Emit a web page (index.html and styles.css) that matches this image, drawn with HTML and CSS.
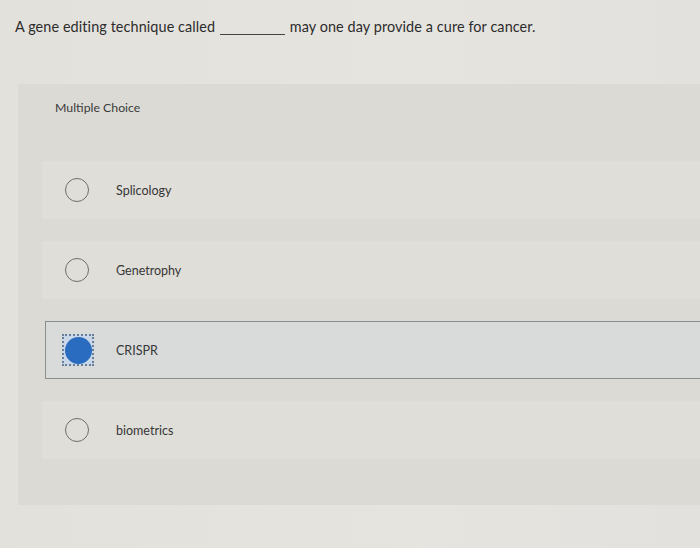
FILE: index.html
```html
<!DOCTYPE html>
<html>
<head>
<meta charset="utf-8">
<link rel="stylesheet" href="styles.css">
</head>
<body>
<div class="page">
  <p class="question">A gene editing technique called <span class="blank"></span> may one day provide a cure for cancer.</p>
  <div class="panel">
    <div class="kind">Multiple Choice</div>
    <div class="options">
      <div class="option"><span class="radio"></span><span class="label">Splicology</span></div>
      <div class="option"><span class="radio"></span><span class="label">Genetrophy</span></div>
      <div class="option selected"><span class="focus"><span class="radio on"></span></span><span class="label">CRISPR</span></div>
      <div class="option"><span class="radio"></span><span class="label">biometrics</span></div>
    </div>
  </div>
</div>
</body>
</html>
```
FILE: styles.css
```css
html, body {
  margin: 0;
  padding: 0;
}
body {
  width: 700px;
  height: 548px;
  overflow: hidden;
  background: linear-gradient(90deg, #e3e1dc 0%, #e6e4df 60%, #e2e1dd 100%);
  font-family: "Lato", "Open Sans", sans-serif;
  color: #333;
}
.page {
  padding-top: 17px;
}
.question {
  margin: 0 0 0 15px;
  font-size: 14.4px;
  line-height: 20px;
  letter-spacing: 0.1px;
  color: #2c2c2c;
}
.blank {
  display: inline-block;
  width: 65px;
  border-bottom: 1px solid #444;
  vertical-align: -3px;
  margin: 0 1px;
}
.panel {
  margin-top: 47px;
  margin-left: 18px;
  background: #dcdad5;
  padding: 16px 0 46px 0;
}
.kind {
  margin-left: 37px;
  font-size: 12.3px;
  line-height: 16px;
  color: #3a3a3a;
}
.options {
  margin-top: 45px;
  display: flex;
  flex-direction: column;
  gap: 22px;
  margin-left: 24px;
}
.option {
  height: 58px;
  display: flex;
  align-items: center;
  background: #e0ded9;
  padding-left: 23px;
}
.option.selected {
  background: #d8dbda;
  border: 1px solid #8d8d8d;
  border-right: none;
  margin-left: 3px;
  padding-left: 16px;
  height: 56px;
}
.radio {
  width: 24px;
  height: 24px;
  border: 1.5px solid #6e6e6e;
  border-radius: 50%;
  box-sizing: border-box;
  flex: none;
}
.focus {
  width: 32px;
  height: 32px;
  border: 2px dotted #6a7f95;
  box-sizing: border-box;
  display: flex;
  align-items: center;
  justify-content: center;
  background: #c9d8e8;
  flex: none;
}
.radio.on {
  width: 27px;
  height: 27px;
  border: none;
  background: #2a6cbf;
}
.label {
  margin-left: 27px;
  font-size: 12.5px;
  color: #363636;
}
.selected .label {
  margin-left: 22px;
}
```
